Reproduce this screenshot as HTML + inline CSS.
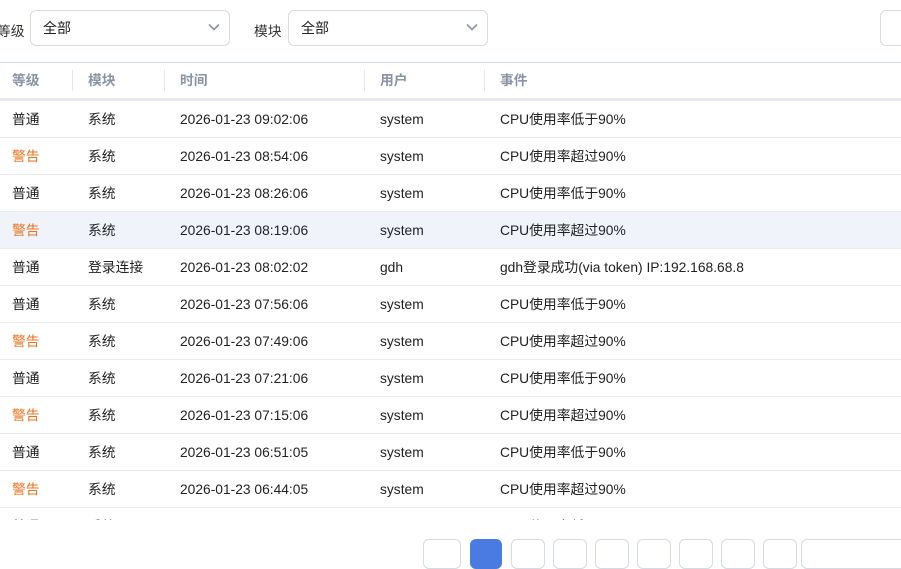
<!DOCTYPE html>
<html><head><meta charset="utf-8"><style>
*{box-sizing:border-box;margin:0;padding:0}
body{width:901px;height:545px;overflow:hidden;background:#fff;font-family:"Liberation Sans","Noto Sans CJK SC",sans-serif;font-size:13.8px;color:#222;position:relative}
.lbl{position:absolute;top:20px;font-size:13.8px;color:#333}
.sel{position:absolute;top:10px;height:36px;border:1px solid #d6dae2;border-radius:6px;padding:0 12px;line-height:34px;font-size:14px;color:#222}
.sel svg{position:absolute;right:9px;top:12px}
.tbl{position:absolute;top:62px;left:0;width:901px;height:458px;overflow:hidden;border-top:1px solid #d3dbe6}
.row{position:relative;height:37px;border-bottom:1px solid #e8ebf0}
.row span{position:absolute;top:0;line-height:37px;white-space:nowrap}
.hd{height:38px;border-bottom:3px solid #e6eaf0}
.hd span{color:#8a94a6;font-weight:bold;line-height:36px}
.hd i{position:absolute;top:7px;width:1px;height:21px;background:#e3e7ed}
.w{color:#e8731e}
.hl{background:#f0f4fa}
.pg{position:absolute;top:539px;height:30px;border:1px solid #d6dae2;border-radius:6px;background:#fff}
</style></head><body>
<div class="lbl" style="left:-3px">等级</div>
<div class="sel" style="left:30px;width:200px">全部<svg width="12" height="8" viewBox="0 0 12 8"><path d="M1 1.5l5 5 5-5" fill="none" stroke="#8a94a6" stroke-width="1.6"/></svg></div>
<div class="lbl" style="left:254px">模块</div>
<div class="sel" style="left:288px;width:200px">全部<svg width="12" height="8" viewBox="0 0 12 8"><path d="M1 1.5l5 5 5-5" fill="none" stroke="#8a94a6" stroke-width="1.6"/></svg></div>
<div class="sel" style="left:880px;width:40px"></div>
<div class="tbl">
<div class="row hd"><span style="left:12px">等级</span><i style="left:72px"></i><span style="left:88px">模块</span><i style="left:164px"></i><span style="left:180px">时间</span><i style="left:364px"></i><span style="left:380px">用户</span><i style="left:484px"></i><span style="left:500px">事件</span></div>
<div class="row"><span style="left:12px">普通</span><span style="left:88px">系统</span><span style="left:180px">2026-01-23 09:02:06</span><span style="left:380px">system</span><span style="left:500px">CPU使用率低于90%</span></div>
<div class="row"><span class="w" style="left:12px">警告</span><span style="left:88px">系统</span><span style="left:180px">2026-01-23 08:54:06</span><span style="left:380px">system</span><span style="left:500px">CPU使用率超过90%</span></div>
<div class="row"><span style="left:12px">普通</span><span style="left:88px">系统</span><span style="left:180px">2026-01-23 08:26:06</span><span style="left:380px">system</span><span style="left:500px">CPU使用率低于90%</span></div>
<div class="row hl"><span class="w" style="left:12px">警告</span><span style="left:88px">系统</span><span style="left:180px">2026-01-23 08:19:06</span><span style="left:380px">system</span><span style="left:500px">CPU使用率超过90%</span></div>
<div class="row"><span style="left:12px">普通</span><span style="left:88px">登录连接</span><span style="left:180px">2026-01-23 08:02:02</span><span style="left:380px">gdh</span><span style="left:500px">gdh登录成功(via token) IP:192.168.68.8</span></div>
<div class="row"><span style="left:12px">普通</span><span style="left:88px">系统</span><span style="left:180px">2026-01-23 07:56:06</span><span style="left:380px">system</span><span style="left:500px">CPU使用率低于90%</span></div>
<div class="row"><span class="w" style="left:12px">警告</span><span style="left:88px">系统</span><span style="left:180px">2026-01-23 07:49:06</span><span style="left:380px">system</span><span style="left:500px">CPU使用率超过90%</span></div>
<div class="row"><span style="left:12px">普通</span><span style="left:88px">系统</span><span style="left:180px">2026-01-23 07:21:06</span><span style="left:380px">system</span><span style="left:500px">CPU使用率低于90%</span></div>
<div class="row"><span class="w" style="left:12px">警告</span><span style="left:88px">系统</span><span style="left:180px">2026-01-23 07:15:06</span><span style="left:380px">system</span><span style="left:500px">CPU使用率超过90%</span></div>
<div class="row"><span style="left:12px">普通</span><span style="left:88px">系统</span><span style="left:180px">2026-01-23 06:51:05</span><span style="left:380px">system</span><span style="left:500px">CPU使用率低于90%</span></div>
<div class="row"><span class="w" style="left:12px">警告</span><span style="left:88px">系统</span><span style="left:180px">2026-01-23 06:44:05</span><span style="left:380px">system</span><span style="left:500px">CPU使用率超过90%</span></div>
<div class="row"><span style="left:12px">普通</span><span style="left:88px">系统</span><span style="left:180px">2026-01-23 06:16:05</span><span style="left:380px">system</span><span style="left:500px">CPU使用率低于90%</span></div>
</div>
<div class="pg" style="left:423px;width:38px"></div>
<div class="pg" style="left:470px;width:32px;background:#4a7be0;border-color:#4a7be0"></div>
<div class="pg" style="left:511px;width:34px"></div>
<div class="pg" style="left:553px;width:34px"></div>
<div class="pg" style="left:595px;width:34px"></div>
<div class="pg" style="left:637px;width:34px"></div>
<div class="pg" style="left:679px;width:34px"></div>
<div class="pg" style="left:721px;width:34px"></div>
<div class="pg" style="left:763px;width:34px"></div>
<div class="pg" style="left:801px;width:110px"></div>
</body></html>
